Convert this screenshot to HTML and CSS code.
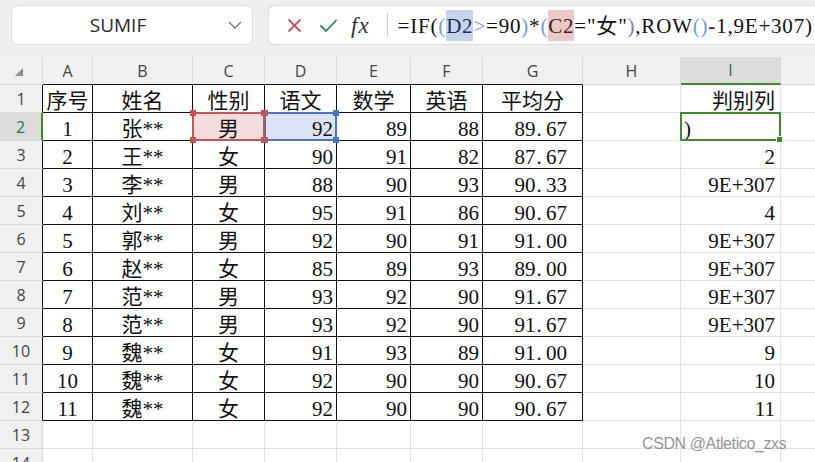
FILE: index.html
```html
<!DOCTYPE html>
<html lang="zh">
<head>
<meta charset="utf-8">
<title>Sheet</title>
<link rel="stylesheet" href="styles.css">
</head>
<body>
<div class="app">
  <div class="toolbar">
    <div class="namebox">
      <span class="name">SUMIF</span>
      <svg class="chev" width="14" height="8" viewBox="0 0 14 8"><path d="M1 1 L7 7 L13 1" fill="none" stroke="#777" stroke-width="1.3"/></svg>
    </div>
    <div class="fbar">
      <svg class="ficon" width="15" height="15" viewBox="0 0 15 15"><path d="M1.5 1.5 L13.5 13.5 M13.5 1.5 L1.5 13.5" stroke="#d64a5c" stroke-width="1.8" fill="none"/></svg>
      <svg class="ficon ok" width="19" height="15" viewBox="0 0 19 15"><path d="M1.5 7.5 L7 13 L17.5 2" stroke="#1f8a5b" stroke-width="1.8" fill="none"/></svg>
      <span class="fx">fx</span>
      <span class="fdiv"></span>
      <div class="formula">=IF(<span class="pb">(</span><span class="refd">D2</span><span class="pb">&gt;</span>=90<span class="pb">)</span>*<span class="pb">(</span><span class="refc">C2</span>="女"<span class="pp">)</span>,ROW<span class="pb">()</span>-1,9E+307)</div>
    </div>
  </div>

  <div class="sheet">
    <!-- header -->
    <div class="corner"><span class="tri"></span></div>
    <div class="hd tb">A</div><div class="hd tb">B</div><div class="hd tb">C</div><div class="hd tb">D</div><div class="hd tb">E</div><div class="hd tb">F</div><div class="hd tb">G</div><div class="hd">H</div><div class="hd act">I</div><div class="hd"></div>

    <!-- row 1 -->
    <div class="rh tr">1</div>
    <div class="c t ctr">序号</div><div class="c t ctr">姓名</div><div class="c t ctr">性别</div><div class="c t ctr">语文</div><div class="c t ctr">数学</div><div class="c t ctr">英语</div><div class="c t ctr">平均分</div><div class="c"></div><div class="c r ri">判别列</div><div class="c"></div>

    <!-- row 2 -->
    <div class="rh tr act">2</div>
    <div class="c t ctr">1</div><div class="c t ctr">张**</div>
    <div class="c t ctr refcell red">男<span class="hdl tl"></span><span class="hdl trr"></span><span class="hdl bl"></span><span class="hdl br"></span></div>
    <div class="c t r refcell blue">92<span class="hdl tl"></span><span class="hdl trr"></span><span class="hdl bl"></span><span class="hdl br"></span></div>
    <div class="c t r">89</div><div class="c t r">88</div><div class="c t r g">89<span class="dot">.</span>67</div><div class="c"></div><div class="c sel">)</div><div class="c"></div>

    <div class="rh tr">3</div>
    <div class="c t ctr">2</div><div class="c t ctr">王**</div><div class="c t ctr">女</div><div class="c t r">90</div><div class="c t r">91</div><div class="c t r">82</div><div class="c t r g">87<span class="dot">.</span>67</div><div class="c"></div><div class="c r ri">2</div><div class="c"></div>

    <div class="rh tr">4</div>
    <div class="c t ctr">3</div><div class="c t ctr">李**</div><div class="c t ctr">男</div><div class="c t r">88</div><div class="c t r">90</div><div class="c t r">93</div><div class="c t r g">90<span class="dot">.</span>33</div><div class="c"></div><div class="c r ri">9E+307</div><div class="c"></div>

    <div class="rh tr">5</div>
    <div class="c t ctr">4</div><div class="c t ctr">刘**</div><div class="c t ctr">女</div><div class="c t r">95</div><div class="c t r">91</div><div class="c t r">86</div><div class="c t r g">90<span class="dot">.</span>67</div><div class="c"></div><div class="c r ri">4</div><div class="c"></div>

    <div class="rh tr">6</div>
    <div class="c t ctr">5</div><div class="c t ctr">郭**</div><div class="c t ctr">男</div><div class="c t r">92</div><div class="c t r">90</div><div class="c t r">91</div><div class="c t r g">91<span class="dot">.</span>00</div><div class="c"></div><div class="c r ri">9E+307</div><div class="c"></div>

    <div class="rh tr">7</div>
    <div class="c t ctr">6</div><div class="c t ctr">赵**</div><div class="c t ctr">女</div><div class="c t r">85</div><div class="c t r">89</div><div class="c t r">93</div><div class="c t r g">89<span class="dot">.</span>00</div><div class="c"></div><div class="c r ri">9E+307</div><div class="c"></div>

    <div class="rh tr">8</div>
    <div class="c t ctr">7</div><div class="c t ctr">范**</div><div class="c t ctr">男</div><div class="c t r">93</div><div class="c t r">92</div><div class="c t r">90</div><div class="c t r g">91<span class="dot">.</span>67</div><div class="c"></div><div class="c r ri">9E+307</div><div class="c"></div>

    <div class="rh tr">9</div>
    <div class="c t ctr">8</div><div class="c t ctr">范**</div><div class="c t ctr">男</div><div class="c t r">93</div><div class="c t r">92</div><div class="c t r">90</div><div class="c t r g">91<span class="dot">.</span>67</div><div class="c"></div><div class="c r ri">9E+307</div><div class="c"></div>

    <div class="rh tr">10</div>
    <div class="c t ctr">9</div><div class="c t ctr">魏**</div><div class="c t ctr">女</div><div class="c t r">91</div><div class="c t r">93</div><div class="c t r">89</div><div class="c t r g">91<span class="dot">.</span>00</div><div class="c"></div><div class="c r ri">9</div><div class="c"></div>

    <div class="rh tr">11</div>
    <div class="c t ctr">10</div><div class="c t ctr">魏**</div><div class="c t ctr">女</div><div class="c t r">92</div><div class="c t r">90</div><div class="c t r">90</div><div class="c t r g">90<span class="dot">.</span>67</div><div class="c"></div><div class="c r ri">10</div><div class="c"></div>

    <div class="rh tr">12</div>
    <div class="c t ctr">11</div><div class="c t ctr">魏**</div><div class="c t ctr">女</div><div class="c t r">92</div><div class="c t r">90</div><div class="c t r">90</div><div class="c t r g">90<span class="dot">.</span>67</div><div class="c"></div><div class="c r ri">11</div><div class="c"></div>

    <div class="rh">13</div>
    <div class="c"></div><div class="c"></div><div class="c"></div><div class="c"></div><div class="c"></div><div class="c"></div><div class="c"></div><div class="c"></div><div class="c"></div><div class="c"></div>

    <div class="rh">14</div>
    <div class="c"></div><div class="c"></div><div class="c"></div><div class="c"></div><div class="c"></div><div class="c"></div><div class="c"></div><div class="c"></div><div class="c"></div><div class="c"></div>
  </div>

  <div class="watermark">CSDN @Atletico_zxs</div>
</div>
</body>
</html>
```

FILE: styles.css
```css
html, body {
  margin: 0;
  padding: 0;
  background: #ffffff;
  overflow: hidden;
}

.app {
  position: relative;
  width: 815px;
  height: 462px;
  overflow: hidden;
}

/* ---------- toolbar ---------- */
.toolbar {
  height: 57px;
  box-sizing: border-box;
  padding: 5px 0 0 11px;
  background: #efefef;
  display: flex;
  gap: 15px;
  align-items: flex-start;
}

.namebox {
  width: 242px;
  height: 40px;
  box-sizing: border-box;
  background: #ffffff;
  border: 1px solid #dcdcdc;
  border-radius: 6px;
  display: flex;
  align-items: center;
  flex: none;
}

.namebox .name {
  flex: 1;
  text-align: center;
  padding-right: 4px;
  font-family: "Open Sans", "Liberation Sans", sans-serif;
  font-size: 19px;
  color: #2a2a2a;
}

.namebox .chev {
  margin-right: 10px;
  flex: none;
}

.fbar {
  width: 640px;
  height: 40px;
  box-sizing: border-box;
  background: #ffffff;
  border: 1px solid #dcdcdc;
  border-right: none;
  border-radius: 6px 0 0 6px;
  display: flex;
  align-items: center;
  padding-left: 18px;
  flex: none;
}

.ficon {
  flex: none;
}

.ficon.ok {
  margin-left: 17px;
}

.fx {
  margin-left: 13px;
  font-family: "Liberation Serif", serif;
  font-style: italic;
  font-size: 23px;
  color: #333;
  line-height: 1;
  letter-spacing: 1px;
}

.fdiv {
  width: 1px;
  height: 24px;
  background: #cfcfcf;
  margin-left: 17px;
  margin-right: 10px;
}

.formula {
  font-family: "Liberation Serif", "Noto Sans CJK SC", serif;
  font-size: 21px;
  letter-spacing: 0.8px;
  color: #111;
  white-space: nowrap;
  line-height: 30px;
  padding-top: 1px;
}

.formula .pb { color: #6f9ce0; }
.formula .pp { color: #7c7ce0; }

.formula .refd {
  background: #c6d3ef;
  color: #1b2a55;
  padding: 4px 0 3px;
}

.formula .refc {
  background: #ecc8c8;
  color: #3a1a1a;
  padding: 4px 0 3px;
}

/* ---------- sheet ---------- */
.sheet {
  display: grid;
  grid-template-columns: 43px 50px 100px 72px 72px 74px 72px 100px 98px 100px 100px;
  grid-auto-rows: 28px;
  width: 881px;
}

.corner,
.hd,
.rh {
  background: #f0f0f0;
  box-sizing: border-box;
  border-right: 1px solid #dadada;
  border-bottom: 1px solid #dadada;
  font-family: "Open Sans", "Liberation Sans", sans-serif;
  font-size: 16px;
  color: #454545;
  display: flex;
  align-items: center;
  justify-content: center;
}

.corner {
  position: relative;
}

.tri {
  position: absolute;
  left: 15px;
  top: 11px;
  width: 0;
  height: 0;
  border-left: 8px solid transparent;
  border-bottom: 8px solid #8f8f8f;
}

.hd.tb {
  border-bottom-color: #111;
}

.hd.act {
  background: #dcdcdc;
  color: #1f6b3f;
  border-bottom: 2px solid #3f8a2c;
}

.rh.tr {
  border-right-color: #111;
}

.rh.act {
  background: #dcdcdc;
  color: #1a7a4f;
  border-right: 2px solid #3f8a2c;
}

.c {
  box-sizing: border-box;
  border-right: 1px solid #e2e2e2;
  border-bottom: 1px solid #e2e2e2;
  font-family: "Liberation Serif", "Noto Sans CJK SC", serif;
  font-size: 21px;
  color: #111;
  line-height: 21px;
  display: flex;
  align-items: flex-end;
  white-space: nowrap;
  overflow: visible;
}

.c.t {
  border-right-color: #111;
  border-bottom-color: #111;
}

.c.ctr { justify-content: center; }

.c.r {
  justify-content: flex-end;
  padding-right: 3px;
}

.c.r.g { padding-right: 15px; }
.c.r.ri { padding-right: 5px; }

.dot {
  display: inline-block;
  width: 0.5em;
  padding-left: 1px;
  box-sizing: border-box;
}

/* reference highlights */
.refcell {
  position: relative;
}

.refcell::after {
  content: "";
  position: absolute;
  left: -1px;
  top: -1px;
  right: -1px;
  bottom: -1px;
  border: 2px solid;
  pointer-events: none;
}

.refcell.red {
  background: #f3dcdc;
}
.refcell.red::after { border-color: #c55455; }
.refcell.red .hdl { background: #c55455; }

.refcell.blue {
  background: #dbe3f5;
}
.refcell.blue::after { border-color: #4b74cf; }
.refcell.blue .hdl { background: #4b74cf; }

.refcell.red { z-index: 2; }
.refcell.blue { z-index: 1; }

.hdl {
  position: absolute;
  width: 6px;
  height: 6px;
  z-index: 3;
}
.hdl.tl { left: -3px; top: -3px; }
.hdl.trr { right: -3px; top: -3px; }
.hdl.bl { left: -3px; bottom: -3px; }
.hdl.br { right: -3px; bottom: -3px; }

/* active cell */
.sel {
  position: relative;
  padding-left: 3px;
}

.sel::after {
  content: "";
  position: absolute;
  left: -1px;
  top: -1px;
  right: -1px;
  bottom: -1px;
  border: 2px solid #3f8a2c;
}

.sel::before {
  content: "";
  position: absolute;
  right: -3px;
  bottom: -3px;
  width: 5px;
  height: 5px;
  background: #3f8a2c;
  border: 1px solid #ffffff;
  z-index: 2;
}

.watermark {
  position: absolute;
  left: 642px;
  top: 435px;
  font-family: "Liberation Sans", Arial, sans-serif;
  font-size: 16px;
  letter-spacing: -0.4px;
  color: rgba(120, 120, 120, 0.8);
}
```
